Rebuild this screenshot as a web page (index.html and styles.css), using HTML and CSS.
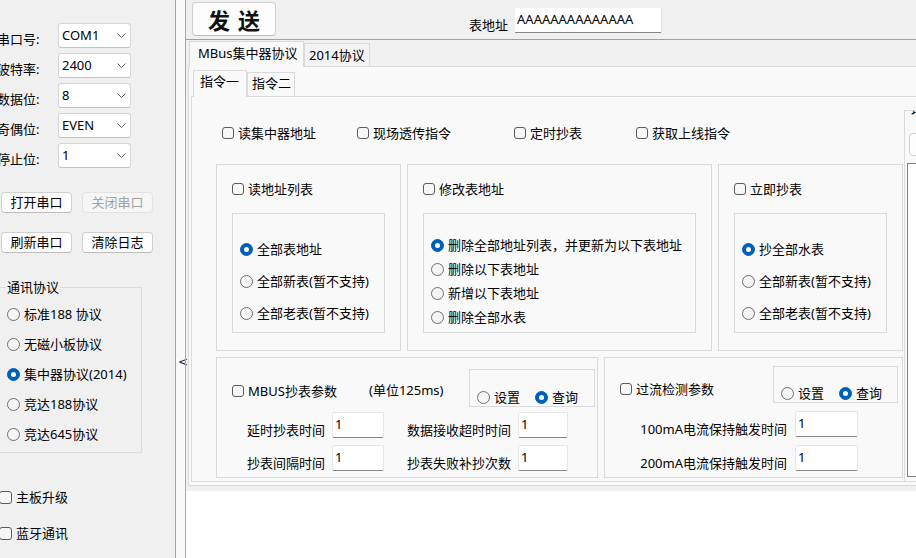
FILE: index.html
```html
<!DOCTYPE html>
<html lang="zh-CN">
<head>
<meta charset="utf-8">
<title>MBus</title>
<link rel="stylesheet" href="styles.css">
</head>
<body>
<div class="app">
  <aside class="left">
    <div class="field"><span class="flbl">串口号:</span><div class="combo"><span>COM1</span><svg class="chev" width="9" height="5" viewBox="0 0 9 5"><path d="M0.5 0.5 L4.5 4.5 L8.5 0.5" fill="none" stroke="#606060" stroke-width="1"/></svg></div></div>
    <div class="field"><span class="flbl">波特率:</span><div class="combo"><span>2400</span><svg class="chev" width="9" height="5" viewBox="0 0 9 5"><path d="M0.5 0.5 L4.5 4.5 L8.5 0.5" fill="none" stroke="#606060" stroke-width="1"/></svg></div></div>
    <div class="field"><span class="flbl">数据位:</span><div class="combo"><span>8</span><svg class="chev" width="9" height="5" viewBox="0 0 9 5"><path d="M0.5 0.5 L4.5 4.5 L8.5 0.5" fill="none" stroke="#606060" stroke-width="1"/></svg></div></div>
    <div class="field"><span class="flbl">奇偶位:</span><div class="combo"><span>EVEN</span><svg class="chev" width="9" height="5" viewBox="0 0 9 5"><path d="M0.5 0.5 L4.5 4.5 L8.5 0.5" fill="none" stroke="#606060" stroke-width="1"/></svg></div></div>
    <div class="field"><span class="flbl">停止位:</span><div class="combo"><span>1</span><svg class="chev" width="9" height="5" viewBox="0 0 9 5"><path d="M0.5 0.5 L4.5 4.5 L8.5 0.5" fill="none" stroke="#606060" stroke-width="1"/></svg></div></div>
    <div class="btnrow first"><button class="btn">打开串口</button><button class="btn dis">关闭串口</button></div>
    <div class="btnrow second"><button class="btn">刷新串口</button><button class="btn">清除日志</button></div>
    <div class="proto">
      <span class="legend">通讯协议</span>
      <div class="plist">
        <div class="ritem"><span class="rb"></span>标准188 协议</div>
        <div class="ritem"><span class="rb"></span>无磁小板协议</div>
        <div class="ritem"><span class="rb on"></span>集中器协议(2014)</div>
        <div class="ritem"><span class="rb"></span>竞达188协议</div>
        <div class="ritem"><span class="rb"></span>竞达645协议</div>
      </div>
    </div>
    <div class="lchk first"><span class="cb"></span>主板升级</div>
    <div class="lchk second"><span class="cb"></span>蓝牙通讯</div>
  </aside>
  <div class="splitter"><span class="arrow">&lt;</span></div>
  <main class="main">
    <div class="topbar">
      <button class="send">发送</button>
      <span class="addr-lbl">表地址</span>
      <div class="addr">AAAAAAAAAAAAAA</div>
    </div>
    <div class="tabctl">
      <div class="tabstrip">
        <div class="tab on">MBus集中器协议</div>
        <div class="tab t2014">2014协议</div>
      </div>
      <div class="tabpanel">
        <div class="tabstrip2">
          <div class="tab2 on">指令一</div>
          <div class="tab2">指令二</div>
        </div>
        <div class="inner">
          <div class="col">
            <div class="chkrow">
              <div class="citem w1"><span class="cb"></span>读集中器地址</div>
              <div class="citem w2"><span class="cb"></span>现场透传指令</div>
              <div class="citem w3"><span class="cb"></span>定时抄表</div>
              <div class="citem"><span class="cb"></span>获取上线指令</div>
            </div>
            <div class="row1">
              <div class="grp g1">
                <div class="citem"><span class="cb"></span>读地址列表</div>
                <div class="ibox ib-sm">
                  <div class="ritem"><span class="rb on"></span>全部表地址</div>
                  <div class="ritem"><span class="rb"></span>全部新表(暂不支持)</div>
                  <div class="ritem"><span class="rb"></span>全部老表(暂不支持)</div>
                </div>
              </div>
              <div class="grp g2">
                <div class="citem"><span class="cb"></span>修改表地址</div>
                <div class="ibox ib-lg">
                  <div class="ritem"><span class="rb on"></span>删除全部地址列表，并更新为以下表地址</div>
                  <div class="ritem"><span class="rb"></span>删除以下表地址</div>
                  <div class="ritem"><span class="rb"></span>新增以下表地址</div>
                  <div class="ritem"><span class="rb"></span>删除全部水表</div>
                </div>
              </div>
              <div class="grp g3">
                <div class="citem"><span class="cb"></span>立即抄表</div>
                <div class="ibox ib-sm">
                  <div class="ritem"><span class="rb on"></span>抄全部水表</div>
                  <div class="ritem"><span class="rb"></span>全部新表(暂不支持)</div>
                  <div class="ritem"><span class="rb"></span>全部老表(暂不支持)</div>
                </div>
              </div>
            </div>
            <div class="row2">
              <div class="grp g4">
                <div class="ptop">
                  <div class="citem"><span class="cb"></span>MBUS抄表参数</div>
                  <span class="unit">(单位125ms)</span>
                  <div class="rbox"><div class="ritem"><span class="rb"></span>设置</div><div class="ritem"><span class="rb on"></span>查询</div></div>
                </div>
                <div class="prow">
                  <span class="pl l1">延时抄表时间</span><div class="tb tb1">1</div>
                  <span class="pl l2">数据接收超时时间</span><div class="tb tb2">1</div>
                </div>
                <div class="prow">
                  <span class="pl l1">抄表间隔时间</span><div class="tb tb1">1</div>
                  <span class="pl l2">抄表失败补抄次数</span><div class="tb tb2">1</div>
                </div>
              </div>
              <div class="grp g5">
                <div class="ptop">
                  <div class="citem"><span class="cb"></span>过流检测参数</div>
                  <div class="rbox"><div class="ritem"><span class="rb"></span>设置</div><div class="ritem"><span class="rb on"></span>查询</div></div>
                </div>
                <div class="prow">
                  <span class="pl l5">100mA电流保持触发时间</span><div class="tb tb5">1</div>
                </div>
                <div class="prow">
                  <span class="pl l5">200mA电流保持触发时间</span><div class="tb tb5">1</div>
                </div>
              </div>
            </div>
          </div>
          <div class="side">
            <span class="slegend">地址列表</span>
            <div class="sbtn"></div>
            <div class="slist"></div>
          </div>
        </div>
      </div>
    </div>
    <div class="sep"></div>
    <div class="log"></div>
  </main>
</div>
</body>
</html>
```

FILE: styles.css
```css
* { box-sizing: border-box; margin: 0; padding: 0; }
html, body { width: 916px; height: 558px; overflow: hidden; }
body {
  font-family: "Noto Sans", "Noto Sans CJK SC", sans-serif;
  font-size: 13px;
  line-height: 17px;
  color: #000;
  background: #f0f0f0;
}
.app { display: flex; height: 558px; }

/* ---------- left panel ---------- */
.left {
  width: 176px;
  flex: none;
  border-right: 1px solid #a0a0a0;
  padding-top: 23px;
  background: #f0f0f0;
  display: flex;
  flex-direction: column;
}
.field { display: flex; align-items: flex-start; height: 25px; margin-bottom: 5px; flex: none; }
.flbl { width: 61px; margin-left: -3px; padding-top: 8px; white-space: nowrap; }
.combo {
  width: 73px; height: 25px;
  background: #fff;
  border: 1px solid #d6d6d6;
  border-bottom-color: #c2c2c2;
  border-radius: 3px;
  display: flex; align-items: center; justify-content: space-between;
  padding: 0 4px 0 3px;
}
.chev { flex: none; }
.btnrow { display: flex; gap: 10px; padding-left: 1px; flex: none; }
.btnrow.first { margin-top: 19px; }
.btnrow.second { margin-top: 19px; }
.btn {
  width: 71px; height: 21px;
  font: inherit; line-height: 19px;
  background: #fdfdfd;
  border: 1px solid #d0d0d0;
  border-bottom-color: #bcbcbc;
  border-radius: 4px;
  color: #000;
}
.btn.dis { background: #f5f5f5; border-color: #e2e2e2; color: #a2a2a2; }
.proto {
  margin: 34px 0 0 -1px;
  width: 143px; height: 166px;
  flex: none;
  border: 1px solid #dcdcdc;
}
.legend {
  display: block; width: max-content;
  margin: -9px 0 0 6px; padding: 0 1px;
  background: #f0f0f0;
}
.plist { margin-top: 3px; }
.proto .ritem { height: 30px; padding-left: 7px; }
.lchk { display: flex; align-items: center; gap: 4px; height: 20px; margin-left: -1px; flex: none; }
.lchk .cb { width: 13px; height: 13px; }
.lchk.first { margin-top: 34px; }
.lchk.second { margin-top: 16px; }

/* ---------- common controls ---------- */
.ritem { display: flex; align-items: center; gap: 4px; height: 20px; white-space: nowrap; }
.citem { display: flex; align-items: center; gap: 4px; height: 20px; white-space: nowrap; }
.cb {
  width: 12px; height: 12px; flex: none;
  border: 1px solid #5c5c5c;
  border-radius: 3px;
  background: #f7f7f7;
}
.rb {
  width: 13px; height: 13px; flex: none;
  border: 1px solid #6e6e6e;
  border-radius: 50%;
  background: #f5f5f5;
  display: flex; align-items: center; justify-content: center;
}
.rb.on { background: #005fb8; border-color: #005fb8; }
.rb.on::after { content: ""; width: 5px; height: 5px; border-radius: 50%; background: #fff; }

/* ---------- splitter ---------- */
.splitter {
  width: 9px; flex: none;
  background: #f9f9f9;
  padding: 354px 0 0 2px;
  color: #1c1c4c;
  font-size: 12px;
  font-family: "DejaVu Sans", sans-serif;
}

/* ---------- main ---------- */
.main {
  flex: 1; min-width: 0;
  display: flex; flex-direction: column;
  border-left: 1px solid #a9a9a9;
}
.topbar {
  height: 40px; flex: none;
  display: flex; align-items: flex-start;
  border-bottom: 1px solid #a0a0a0;
}
.send {
  margin: 2px 0 0 6px;
  width: 84px; height: 34px;
  background: #fdfdfd;
  border: 1px solid #cfcfcf;
  border-bottom-color: #bcbcbc;
  border-radius: 4px;
  font-family: "Noto Sans CJK SC", sans-serif;
  font-size: 22px; font-weight: 700;
  letter-spacing: 8px; padding-left: 8px;
  line-height: 30px;
  color: #111;
}
.addr-lbl { margin: 17px 0 0 193px; white-space: nowrap; }
.addr {
  margin: 8px 0 0 7px;
  width: 146px; height: 25px;
  background: #fff;
  border-bottom: 1px solid #858585;
  box-shadow: 1px 0 0 #e4e4e4;
  padding: 3px 0 0 2px;
}

/* ---------- tab control ---------- */
.tabctl { height: 446px; flex: none; display: flex; flex-direction: column; }
.tabstrip { height: 26px; flex: none; display: flex; align-items: flex-end; padding-left: 3px; }
.tab {
  height: 23px;
  border: 1px solid #dadada; border-bottom: none;
  background: #f3f3f3;
  padding: 3px 0 0 4px;
  white-space: nowrap;
}
.tab.on {
  width: 115px; height: 26px; margin-bottom: -1px;
  background: #f9f9f9;
  padding: 3px 0 0 8px;
  z-index: 1;
}
.tab.t2014 { width: 66px; }
.tabpanel {
  flex: 1; min-height: 0;
  margin-left: 2px;
  border: 1px solid #dadada; border-right: none;
  background: #f9f9f9;
  display: flex; flex-direction: column;
}
.tabstrip2 { height: 29px; flex: none; display: flex; align-items: flex-end; padding-left: 4px; }
.tab2 {
  width: 48px; height: 24px;
  border: 1px solid #dadada; border-bottom: none;
  background: #f9f9f9;
  padding: 2px 0 0 4px;
  white-space: nowrap;
}
.tab2.on { width: 54px; height: 27px; margin-bottom: -1px; padding: 2px 0 0 6px; z-index: 1; }
.inner {
  flex: 1; min-height: 0;
  margin: 0 0 3px 2px;
  border: 1px solid #dadada; border-right: none;
  display: flex;
  overflow: hidden;
}
.col { width: 712px; flex: none; padding-left: 24px; }
.chkrow { display: flex; height: 46px; padding: 26px 0 0 6px; }
.w1 { width: 135px; }
.w2 { width: 157px; }
.w3 { width: 122px; }

.row1 { display: flex; gap: 6px; margin-top: 21px; }
.row2 { display: flex; gap: 6px; margin-top: 6px; }
.grp { border: 1px solid #dadada; padding: 14px 0 0 15px; }
.g1, .g3 { width: 185px; height: 187px; }
.g2 { width: 305px; height: 187px; }
.ibox { border: 1px solid #dadada; margin-top: 14px; height: 120px; padding-left: 7px; }
.ib-sm { width: 153px; padding-top: 25px; }
.ib-sm .ritem + .ritem { margin-top: 12px; }
.ib-lg { width: 273px; padding-top: 21px; }
.ib-lg .ritem + .ritem { margin-top: 4px; }

.g4 { width: 382px; height: 121px; padding: 0; }
.g5 { width: 299px; height: 121px; padding: 0; }
.ptop { display: flex; align-items: flex-start; margin-top: 11px; height: 38px; }
.g4 .ptop .citem { margin: 12px 0 0 15px; width: 137px; }
.unit { margin-top: 13px; width: 100px; white-space: nowrap; }
.rbox {
  width: 126px; height: 38px;
  border: 1px solid #dadada;
  display: flex; gap: 15px;
  padding: 17px 0 0 7px;
}
.g5 .ptop { margin-top: 8px; height: 37px; }
.g5 .ptop .citem { margin: 13px 0 0 15px; width: 153px; }
.g5 .rbox { width: 125px; height: 37px; padding-top: 16px; }

.prow { display: flex; align-items: flex-end; margin-top: 5px; }
.prow + .prow { margin-top: 7px; }
.g5 .prow { margin-top: 8px; }
.pl { text-align: right; line-height: 15px; white-space: nowrap; }
.l1 { width: 108px; }
.l2 { width: 104px; margin-left: 23px; }
.l5 { width: 182px; }
.tb {
  height: 26px;
  background: #fff;
  border: 1px solid #e6e6e6;
  border-bottom-color: #868686;
  border-radius: 2px;
  padding: 3px 0 0 2px;
}
.tb1 { width: 52px; margin-left: 7px; }
.tb2 { width: 50px; margin-left: 7px; }
.tb5 { width: 63px; margin-left: 8px; }

/* partially visible group on the right */
.side {
  width: 12px; flex: none;
  margin-top: 13px;
  border-left: 1px solid #dadada;
  border-top: 1px solid #dadada;
  overflow: hidden;
}
.slegend {
  display: block; width: max-content;
  margin: -9px 0 0 5px; padding: 0 1px;
  background: #f9f9f9;
}
.sbtn {
  margin: 14px 0 0 4px;
  width: 80px; height: 23px;
  background: #fdfdfd;
  border: 1px solid #d0d0d0;
  border-radius: 4px;
}
.slist {
  margin: 7px 0 0 2px;
  width: 100px; height: 314px;
  background: #fff;
  border: 1px solid #7e7e7e;
}

.sep { height: 5px; flex: none; background: #f0f0f0; }
.log { flex: 1; background: #fff; }
```
